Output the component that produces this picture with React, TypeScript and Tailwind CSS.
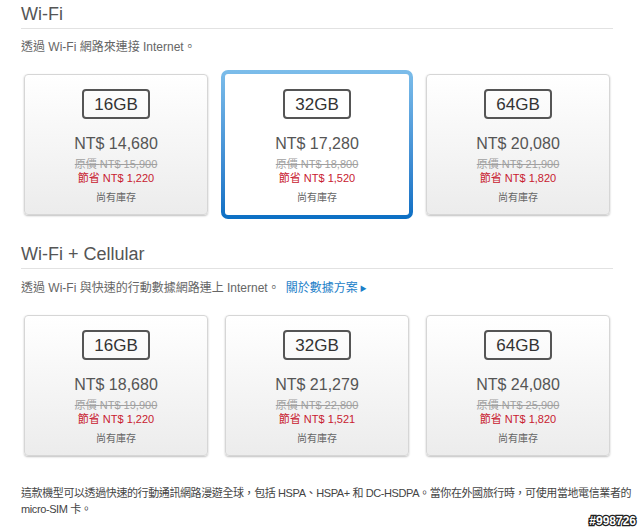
import React from 'react';

type Model = {
    size: string;
    price: string;
    original: string;
    save: string;
    selected?: boolean;
};

const WIFI: Model[] = [
    { size: '16GB', price: 'NT$ 14,680', original: 'NT$ 15,900', save: 'NT$ 1,220' },
    { size: '32GB', price: 'NT$ 17,280', original: 'NT$ 18,800', save: 'NT$ 1,520', selected: true },
    { size: '64GB', price: 'NT$ 20,080', original: 'NT$ 21,900', save: 'NT$ 1,820' }
];

const CELLULAR: Model[] = [
    { size: '16GB', price: 'NT$ 18,680', original: 'NT$ 19,900', save: 'NT$ 1,220' },
    { size: '32GB', price: 'NT$ 21,279', original: 'NT$ 22,800', save: 'NT$ 1,521' },
    { size: '64GB', price: 'NT$ 24,080', original: 'NT$ 25,900', save: 'NT$ 1,820' }
];

function CardBody({ model }: { model: Model }) {
    return (
        <>
            <div className="flex h-[30px] w-[68px] items-center justify-center rounded-[4px] border-2 border-[#555] text-[17px] leading-none text-[#333]">
                {model.size}
            </div>
            <div className="mt-[15px] h-[20px] text-[16px] leading-[20px] text-[#555]">{model.price}</div>
            <div className="mt-[3px] h-[14px] text-[11px] leading-[14px] text-[#a0a0a0] line-through">
                原價 {model.original}
            </div>
            <div className="h-[14px] text-[11px] leading-[14px] text-[#c8202f]">節省 {model.save}</div>
            <div className="mt-[6px] h-[14px] text-[10px] leading-[14px] text-[#666]">尚有庫存</div>
        </>
    );
}

function Card({ model }: { model: Model }) {
    if (model.selected) {
        return (
            <div className="-m-[4px] rounded-[7px] bg-gradient-to-b from-[#7cbdea] to-[#0a6fc4] p-[4px]">
                <div className="flex h-[141px] flex-col items-center rounded-[3px] bg-white pt-[15px]">
                    <CardBody model={model} />
                </div>
            </div>
        );
    }
    return (
        <div className="flex h-[141px] flex-col items-center rounded-[4px] border border-[#d6d6d6] bg-gradient-to-b from-white to-[#ececec] pt-[14px] shadow-[0_1px_2px_rgba(0,0,0,0.25)]">
            <CardBody model={model} />
        </div>
    );
}

function Heading({ children }: { children: React.ReactNode }) {
    return (
        <div className="mr-[27px] h-[26px] border-b border-[#e2e2e2] text-[18px] leading-[22px] text-[#555]">
            {children}
        </div>
    );
}

export default function App() {
    return (
        <div className="relative h-[529px] w-[640px] overflow-hidden bg-white pl-[21px] pt-[3px] font-['Liberation_Sans','Noto_Sans_CJK_TC',sans-serif]">
            <Heading>Wi-Fi</Heading>
            <p className="mt-[10px] h-[16px] text-[12px] leading-[16px] text-[#666]">透過 Wi-Fi 網路來連接 Internet。</p>
            <div className="mt-[19px] ml-[3px] grid grid-cols-[184px_184px_184px] gap-x-[17px]">
                {WIFI.map((m) => (
                    <Card key={m.size} model={m} />
                ))}
            </div>

            <div className="mt-[28px]">
                <Heading>Wi-Fi + Cellular</Heading>
            </div>
            <p className="mt-[11px] h-[16px] text-[12px] leading-[16px] text-[#666]">
                透過 Wi-Fi 與快速的行動數據網路連上 Internet。
                <span className="ml-[6px] text-[#1a7ec8]">關於數據方案</span>
                <span className="ml-[2px] align-[1px] text-[7px] text-[#1a7ec8]">▶</span>
            </p>
            <div className="mt-[19px] ml-[3px] grid grid-cols-[184px_184px_184px] gap-x-[17px]">
                {CELLULAR.map((m) => (
                    <Card key={m.size} model={m} />
                ))}
            </div>

            <p className="mt-[29px] whitespace-nowrap text-[11px] leading-[16px] tracking-[-0.4px] text-[#444]">
                這款機型可以透過快速的行動通訊網路漫遊全球，包括 HSPA、HSPA+ 和 DC-HSDPA。當你在外國旅行時，可使用當地電信業者的
                <br />
                micro-SIM 卡。
            </p>

            <div className="absolute bottom-[2px] right-[4px] text-[12px] font-bold leading-none text-white [-webkit-text-stroke:2.5px_#222] [paint-order:stroke_fill]">
                #998726
            </div>
        </div>
    );
}
